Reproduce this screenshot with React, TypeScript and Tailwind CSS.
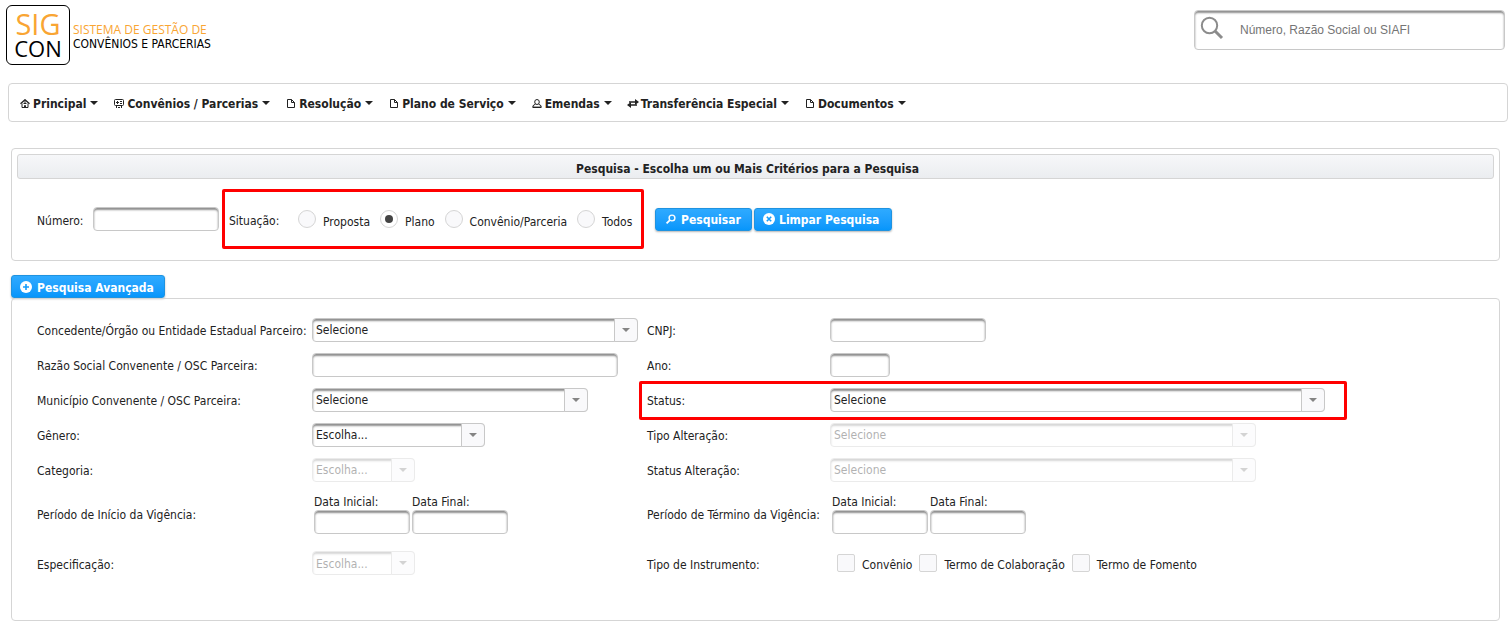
import React, { useState } from 'react';

const menuItems = [
  { label: 'Principal', icon: 'home' },
  { label: 'Convênios / Parcerias', icon: 'board' },
  { label: 'Resolução', icon: 'doc' },
  { label: 'Plano de Serviço', icon: 'doc' },
  { label: 'Emendas', icon: 'person' },
  { label: 'Transferência Especial', icon: 'transfer' },
  { label: 'Documentos', icon: 'doc' },
];

function MenuIcon({ name }: { name: string }) {
  switch (name) {
    case 'home':
      return (
        <svg className="shrink-0" width="10" height="9" viewBox="0 0 10 9" fill="none" stroke="#222" aria-hidden="true">
          <path d="M0.5 4.7 5 0.8l4.5 3.9" strokeWidth="1.4" />
          <path d="M2 4.5V8.5H8V4.500" />
          <path d="M5 2v2M3.5 4.5h3M4.5 8.5V6.5h1v2" />
        </svg>
      );
    case 'board':
      return (
        <svg className="shrink-0" width="11" height="9" viewBox="0 0 11 9" fill="none" stroke="#222" aria-hidden="true">
          <rect x="0.5" y="0.5" width="9" height="6" rx="1" />
          <path d="M2 3.5h3M3.5 2v3M6 2.5h2M6 4.5h2M2.5 6.5V9M7.5 6.5V9M4 8.5h2" />
        </svg>
      );
    case 'doc':
      return (
        <svg className="shrink-0" width="8" height="9" viewBox="0 0 8 9" fill="none" stroke="#222" aria-hidden="true">
          <path d="M0.5 0.5H4.5L7.5 3.5V8.5H0.5Z" />
          <path d="M4.5 0.5V3.5H7.5" />
        </svg>
      );
    case 'person':
      return (
        <svg className="shrink-0" width="10" height="9" viewBox="0 0 10 9" fill="none" stroke="#222" aria-hidden="true">
          <ellipse cx="5" cy="3" rx="2.3" ry="2.5" />
          <path d="M3.5 5 1 6.7V8M6.5 5 9 6.7V8" />
          <path d="M0.5 8.3h9" strokeWidth="1.4" />
        </svg>
      );
    default:
      return (
        <svg className="shrink-0" width="12" height="9" viewBox="0 0 12 9" fill="#222" aria-hidden="true">
          <path d="M8 0 12 3 8 6V3.8H2V2.2H8Z" />
          <path d="M4 3 0 6 4 9V6.8H10V5.2H4Z" />
        </svg>
      );
  }
}

function Triangle() {
  return (
    <svg width="8" height="4" viewBox="0 0 8 4" fill="currentColor" aria-hidden="true">
      <path d="M0 0h8L4 4Z" />
    </svg>
  );
}

const inputLook =
  'block h-6 rounded-[4px] border border-[#c8c8c8] bg-white px-1 text-[12px] text-[#222] shadow-[inset_0_2px_2px_#8f8f8f] outline-none';

function TextInput({ id, width }: { id: string; width: string }) {
  return <input id={id} type="text" className={`${inputLook} ${width}`} />;
}

function Dropdown({ id, width, text, disabled }: { id: string; width: string; text: string; disabled?: boolean }) {
  return (
    <div className={`relative ${width} ${disabled ? 'opacity-35' : ''}`}>
      <select
        id={id}
        disabled={disabled}
        className={`${inputLook} w-full appearance-none pt-px pr-6 pl-[3px] disabled:opacity-100`}
      >
        <option>{text}</option>
      </select>
      <span className="pointer-events-none absolute inset-y-0 right-0 flex w-6 items-center justify-center rounded-r-[4px] border border-[#c8c8c8] bg-[#f9f9fb] text-[#848484]">
        <Triangle />
      </span>
    </div>
  );
}

function Field({ id, label, marked, children }: { id: string; label: string; marked?: boolean; children: React.ReactNode }) {
  return (
    <div className="relative col-span-2 grid grid-cols-subgrid items-center">
      <label htmlFor={id} className="pt-[3px]">{label}</label>
      <div>{children}</div>
      {marked && (
        <span className="pointer-events-none absolute -top-px -left-2 h-[39px] w-[708px] rounded-[2px] border-3 border-[#f00]" />
      )}
    </div>
  );
}

function DateRange({ id }: { id: string }) {
  return (
    <div className="flex gap-0.5 pl-0.5">
      <div>
        <label htmlFor={id} className="block h-4 leading-4">Data Inicial:</label>
        <TextInput id={id} width="w-24" />
      </div>
      <div>
        <label htmlFor={`${id}-final`} className="block h-4 leading-4">Data Final:</label>
        <TextInput id={`${id}-final`} width="w-24" />
      </div>
    </div>
  );
}

const buttonLook =
  'flex h-[23px] items-center rounded-[3px] border border-[#1f93e0] bg-linear-to-b from-[#2eaaff] to-[#0696fb] font-bold text-white shadow-[0_1px_2px_#b5b5b5]';

function CircleIcon({ path }: { path: string }) {
  return (
    <svg width="12" height="12" viewBox="0 0 12 12" aria-hidden="true">
      <circle cx="6" cy="6" r="6" fill="#fff" />
      <path d={path} stroke="#149dfc" strokeWidth="1.6" />
    </svg>
  );
}

export default function App() {
  const options = ['Proposta', 'Plano', 'Convênio/Parceria', 'Todos'];
  const [status, setStatus] = useState('Plano');

  return (
    <div className="bg-white pr-[3px] pb-2 pl-2 font-['DejaVu_Sans_Condensed','DejaVu_Sans',sans-serif] text-[12px] leading-[18px] text-[#222]">
      <header className="mr-[3px] -ml-0.5 flex items-start justify-between pt-[5px]">
        <a href="#" className="flex items-center gap-[3px]">
          <span className="flex h-[60px] w-16 flex-col items-center justify-center rounded-[6px] border border-black font-['Open_Sans',sans-serif]">
            <span className="text-[29px] leading-[27px] text-[#f9a533]">SIG</span>
            <span className="text-[22px] leading-[23px] text-black">CON</span>
          </span>
          <span className="flex flex-col pt-[3px] leading-[15px]">
            <span className="font-['Open_Sans',sans-serif] text-[#f9a533]">SISTEMA DE GESTÃO DE</span>
            <span className="text-black">CONVÊNIOS E PARCERIAS</span>
          </span>
        </a>
        <div className="relative mt-[5px]">
          <input
            type="text"
            aria-label="Pesquisa geral"
            placeholder="Número, Razão Social ou SIAFI"
            className="block h-10 w-[311px] rounded-[4px] border border-[#c8c8c8] pl-[45px] font-['Liberation_Sans',sans-serif] text-[12px] shadow-[inset_0_2px_2px_#8f8f8f] outline-none placeholder:text-[#757575]"
          />
          <svg className="absolute top-1.5 left-1.5" width="24" height="24" viewBox="0 0 24 24" fill="none" stroke="#8c8c8c" aria-hidden="true">
            <circle cx="9.5" cy="9.5" r="7.7" strokeWidth="2" />
            <path d="M15 15l7 7" strokeWidth="3" />
          </svg>
        </div>
      </header>

      <nav className="mt-[18px] flex h-[39px] items-center gap-4 rounded-[4px] border border-[#d5d5d5] pl-[11px]">
        {menuItems.map((item) => (
          <button key={item.label} type="button" className="flex items-center gap-[3px] font-bold">
            <span className="flex w-2.5 justify-center pt-px"><MenuIcon name={item.icon} /></span>
            <span className="pt-0.5 pr-px">{item.label}</span>
            <Triangle />
          </button>
        ))}
      </nav>

      <main className="mt-[26px] mr-2 ml-[3px]">
        <section className="h-[113px] rounded-[4px] border border-[#d5d5d5] p-[5px]">
          <h1 className="flex h-[25px] items-center justify-center rounded-[3px] border border-[#d5d5d5] bg-linear-to-b from-[#f6f7f9] to-[#ebedf0] pt-1 pr-4 font-bold">
            Pesquisa - Escolha um ou Mais Critérios para a Pesquisa
          </h1>
          <div className="mt-2.5 flex items-center pl-5">
            <label htmlFor="numero" className="w-14 pt-[3px]">Número:</label>
            <TextInput id="numero" width="w-[126px]" />
            <div
              role="radiogroup"
              aria-label="Situação"
              className="ml-[3px] flex h-[60px] w-[422px] items-center rounded-[2px] border-3 border-[#f00] pl-1"
            >
              <span className="w-[69px] pt-[3px]">Situação:</span>
              <div className="flex gap-2.5">
                {options.map((option) => (
                  <label key={option} className="flex items-center gap-[7px]">
                    <input
                      type="radio"
                      name="situacao"
                      checked={status === option}
                      onChange={() => setStatus(option)}
                      className="grid size-[18px] appearance-none place-content-center rounded-full border border-[#d5d5d5] bg-[#f9f9fb] before:size-2 before:rounded-full checked:bg-white checked:before:bg-[#444]"
                    />
                    <span className="pt-[5px]">{option}</span>
                  </label>
                ))}
              </div>
            </div>
            <div className="ml-[11px] flex gap-0.5">
              <button type="button" className={`${buttonLook} w-[97px] gap-1 pl-[9px]`}>
                <svg width="12" height="12" viewBox="0 0 12 12" fill="none" stroke="#fff" aria-hidden="true">
                  <circle cx="7" cy="5" r="2.9" strokeWidth="1.4" />
                  <path d="M4.9 7.1 1.6 10.4" strokeWidth="1.8" />
                </svg>
                <span className="pt-0.5">Pesquisar</span>
              </button>
              <button type="button" className={`${buttonLook} w-[138px] gap-1 pl-2`}>
                <CircleIcon path="M3.800 3.800l4.400 4.400M8.200 3.800l-4.400 4.400" />
                <span className="pt-0.5">Limpar Pesquisa</span>
              </button>
            </div>
          </div>
        </section>

        <button type="button" className={`${buttonLook} mt-3.5 w-[154px] gap-[5px] pl-2`}>
          <CircleIcon path="M6 3v6M3 6h6" />
          <span className="pt-0.5">Pesquisa Avançada</span>
        </button>

        <section className="rounded-[4px] border border-[#d5d5d5] pt-[13px] pb-[34px] pl-[25px]">
          <div className="grid grid-cols-[275px_335px_183px_1fr] grid-rows-[repeat(5,35px)_53px_46px]">
            <Field id="concedente" label="Concedente/Órgão ou Entidade Estadual Parceiro:">
              <Dropdown id="concedente" width="w-[326px]" text="Selecione" />
            </Field>
            <Field id="cnpj" label="CNPJ:">
              <TextInput id="cnpj" width="w-[156px]" />
            </Field>
            <Field id="razao" label="Razão Social Convenente / OSC Parceira:">
              <TextInput id="razao" width="w-[306px]" />
            </Field>
            <Field id="ano" label="Ano:">
              <TextInput id="ano" width="w-[60px]" />
            </Field>
            <Field id="municipio" label="Município Convenente / OSC Parceira:">
              <Dropdown id="municipio" width="w-[276px]" text="Selecione" />
            </Field>
            <Field id="status" label="Status:" marked>
              <Dropdown id="status" width="w-[495px]" text="Selecione" />
            </Field>
            <Field id="genero" label="Gênero:">
              <Dropdown id="genero" width="w-[173px]" text="Escolha..." />
            </Field>
            <Field id="tipo-alteracao" label="Tipo Alteração:">
              <Dropdown id="tipo-alteracao" width="w-[426px]" text="Selecione" disabled />
            </Field>
            <Field id="categoria" label="Categoria:">
              <Dropdown id="categoria" width="w-[103px]" text="Escolha..." disabled />
            </Field>
            <Field id="status-alteracao" label="Status Alteração:">
              <Dropdown id="status-alteracao" width="w-[426px]" text="Selecione" disabled />
            </Field>
            <Field id="inicio" label="Período de Início da Vigência:">
              <DateRange id="inicio" />
            </Field>
            <Field id="termino" label="Período de Término da Vigência:">
              <DateRange id="termino" />
            </Field>
            <Field id="especificacao" label="Especificação:">
              <Dropdown id="especificacao" width="w-[103px]" text="Escolha..." disabled />
            </Field>
            <Field id="instrumento-0" label="Tipo de Instrumento:">
              <div className="flex gap-[7px] pl-[7px]">
                {['Convênio', 'Termo de Colaboração', 'Termo de Fomento'].map((name, i) => (
                  <label key={name} className="flex items-center gap-[7px]">
                    <input
                      id={`instrumento-${i}`}
                      type="checkbox"
                      className="size-[18px] appearance-none rounded-[2px] border border-[#d5d5d5] bg-[#f9f9fb] checked:bg-[#444]"
                    />
                    <span className="pt-1">{name}</span>
                  </label>
                ))}
              </div>
            </Field>
          </div>
        </section>
      </main>
    </div>
  );
}
